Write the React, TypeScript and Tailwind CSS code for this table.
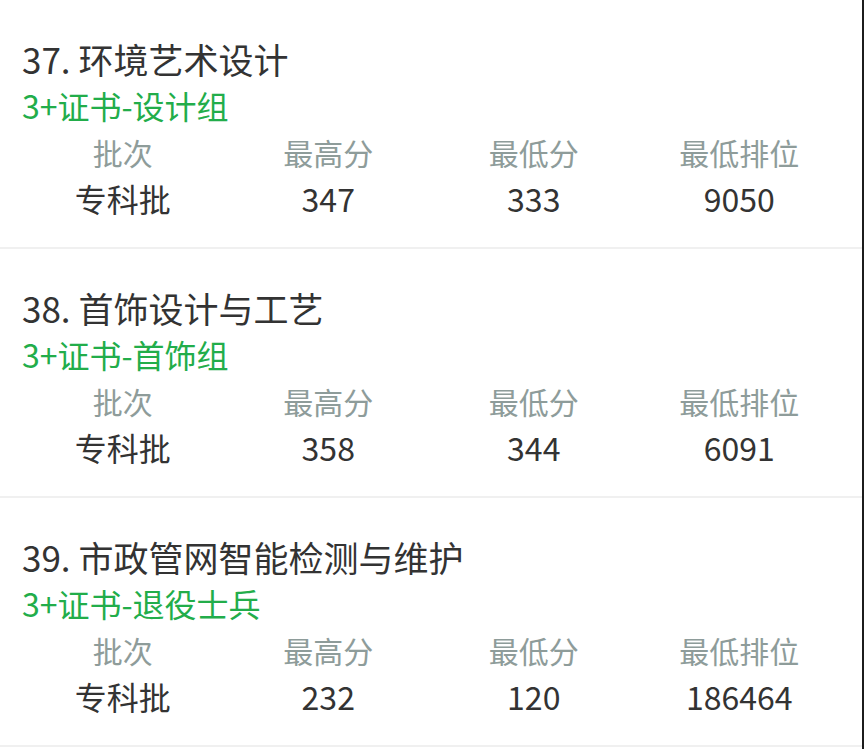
import React from 'react';

const rows = [
    { no: '37.', name: '环境艺术设计', group: '3+证书-设计组', batch: '专科批', max: '347', min: '333', rank: '9050' },
    { no: '38.', name: '首饰设计与工艺', group: '3+证书-首饰组', batch: '专科批', max: '358', min: '344', rank: '6091' },
    { no: '39.', name: '市政管网智能检测与维护', group: '3+证书-退役士兵', batch: '专科批', max: '232', min: '120', rank: '186464' },
];

const font = { fontFamily: '"Noto Sans CJK SC", "Noto Sans", sans-serif' };

const App = () => {
    return (
        <div className="flex w-[864px] h-[749px] bg-white overflow-hidden" style={font}>
            <div className="flex-1 flex flex-col">
                {rows.map((r) => (
                    <div key={r.no} className="pt-[36px] pb-[27px] border-b-2 border-[#f0f0f0]">
                        <div className="pl-[22px] text-[35px] leading-[46px] text-[#333333]">
                            {r.no} {r.name}
                        </div>
                        <div className="pl-[22px] text-[32px] leading-[46px] text-[#22ad4a]">{r.group}</div>
                        <div className="grid grid-cols-4 px-[20px] text-center text-[30px] leading-[48px] text-[#8e9c9a]">
                            <div>批次</div>
                            <div>最高分</div>
                            <div>最低分</div>
                            <div>最低排位</div>
                        </div>
                        <div className="grid grid-cols-4 px-[20px] text-center text-[32px] leading-[44px] text-[#333333]">
                            <div>{r.batch}</div>
                            <div>{r.max}</div>
                            <div>{r.min}</div>
                            <div>{r.rank}</div>
                        </div>
                    </div>
                ))}
            </div>
            <div className="w-[2px] bg-[#1c1c1c]" />
        </div>
    );
};

export default App;
